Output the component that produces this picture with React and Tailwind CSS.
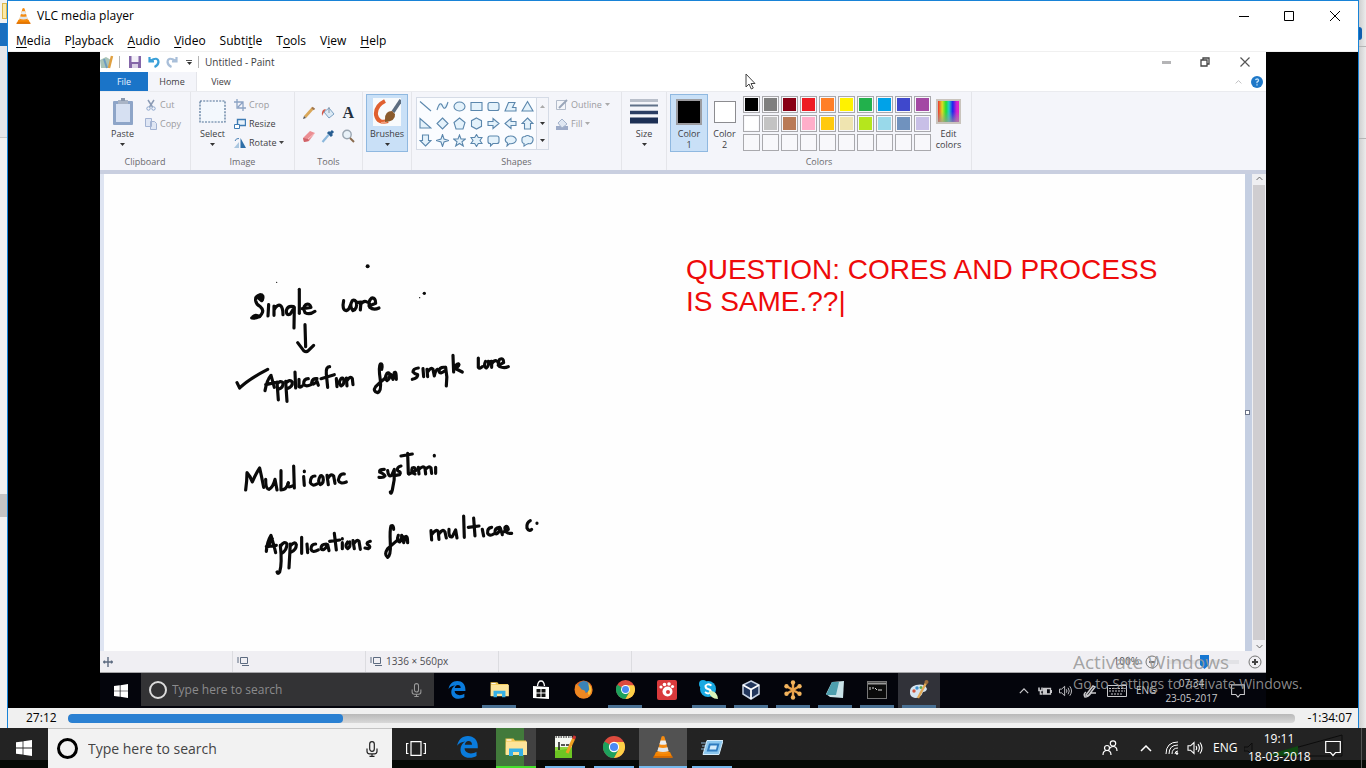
import React from "react";

const Arrow = ({ className = "fill-[#333]" }) => (
  <svg viewBox="0 0 5 3" className={`h-[3px] w-[5px] ${className}`} aria-hidden="true">
    <path d="M0 0h5L2.5 3z" />
  </svg>
);

/* ---------- shared icons ---------- */

const Cone = ({ className }) => (
  <svg viewBox="0 0 20 22" className={className} aria-hidden="true">
    <path d="M3 16h14l2.5 5.5h-19z" fill="#f58400" />
    <path d="M.8 20h18.4l.6 1.8H.2z" fill="#d86a00" />
    <path d="M8.6.6Q10-.4 11.4.6L16 17q-6 2.600-12 0z" fill="#f58c12" />
    <path d="M7.600 4.500h4.900l1.200 3.700q-3.700 1.200-7.300 0z" fill="#e9eef2" />
    <path d="M5.500 11.200q4.500 1.500 9 0l1.100 3.700q-5.600 2-11.200 0z" fill="#dfe5ea" />
  </svg>
);

const WinLogo = ({ className }) => (
  <svg viewBox="0 0 16 16" className={className} fill="#fff" aria-hidden="true">
    <path d="M0 2.300 6.600 1.400V7.600H0zM7.400 1.300 16 0V7.600H7.400zM0 8.400H6.600V14.600L0 13.700zM7.400 8.400H16V16L7.400 14.700z" />
  </svg>
);

const Edge = ({ className }) => (
  <svg viewBox="0 0 20 21" className={className} fill="#0a7bdc" aria-hidden="true">
    <path d="M.2 9.300C.9 4 4.800 0 10.400 0 16 0 19.800 4 19.800 9.500v2.300H7.200c.1 3.300 2.800 4.800 6 4.800 2 0 3.900-.6 5.400-1.600v4.100C16.800 20.200 14.500 20.800 12 20.800 6.600 20.800 3.300 17.700 3.300 12.800c0-3.300 1.900-6.100 4.600-7.500C4.500 5.500 1.800 7 .2 9.300zM7.400 8.300h6.900c0-2.200-1.100-3.600-3.300-3.600-1.900 0-3.200 1.500-3.600 3.600z" />
  </svg>
);

const Folder = ({ className }) => (
  <svg viewBox="0 0 22 20" className={className} aria-hidden="true">
    <path d="M.5 1.500h8l1.500 2H21v14H.5z" fill="#f2c54b" />
    <path d="M1 4.500h21v13.500H.8z" fill="#fde49a" />
    <path d="M1.500 2.400h5v1.200h-5z" fill="#fff" />
    <path d="M4 19v-7.500h14V19h-4v-4H8v4z" fill="#36b1e6" />
  </svg>
);

const Chrome = ({ className }) => (
  <svg viewBox="0 0 24 24" className={className} aria-hidden="true">
    <circle cx="12" cy="12" r="12" fill="#dd4b3e" />
    <path d="M12 12 1.600 6A12 12 0 0 0 12 24l5.200-9z" fill="#1ea15d" />
    <path d="M12 6.500h10.700A12 12 0 0 1 12 24l5-9z" fill="#fdd047" />
    <circle cx="12" cy="12" r="5.600" fill="#fff" />
    <circle cx="12" cy="12" r="4.400" fill="#4a8af4" />
  </svg>
);

const Mic = ({ className }) => (
  <svg viewBox="0 0 12 16" className={className} fill="none" stroke="currentColor" strokeWidth="1.200" aria-hidden="true">
    <rect x="3.700" y=".7" width="4.600" height="9.600" rx="2.300" />
    <path d="M1 7.500v2.800q0 2.500 2.500 2.500h5q2.500 0 2.500-2.500V7.500M6 12.800v2.600M3.500 15.400h5" />
  </svg>
);

const Speaker = ({ className }) => (
  <svg viewBox="0 0 16 14" className={className} fill="none" stroke="currentColor" strokeWidth="1.100" aria-hidden="true">
    <path d="M1 4.800h2.500L7 1.500v11L3.500 9.200H1zM9 5q1.400 2 0 4M11 3.200q2.800 3.800 0 7.600M13 1.500q4 5.500 0 11" />
  </svg>
);

const Note = ({ className }) => (
  <svg viewBox="0 0 16 16" className={className} fill="none" stroke="currentColor" strokeWidth="1.200" aria-hidden="true">
    <path d="M.7 1h14.600v11H10.500L8 15l-2.500-3H.7z" />
  </svg>
);

const Chevron = ({ className }) => (
  <svg viewBox="0 0 12 7" className={className} fill="none" stroke="currentColor" strokeWidth="1.500" aria-hidden="true">
    <path d="M1 6l5-5 5 5" />
  </svg>
);

/* ---------- VLC window ---------- */

const menus = [
  ["", "M", "edia"],
  ["P", "l", "ayback"],
  ["", "A", "udio"],
  ["", "V", "ideo"],
  ["Subti", "t", "le"],
  ["T", "o", "ols"],
  ["V", "i", "ew"],
  ["", "H", "elp"],
];

function VlcHeader() {
  return (
    <header className="shrink-0 border-b border-[#f0f0f0] bg-white text-black">
      <div className="flex h-[29px] items-center justify-between">
        <div className="flex items-center gap-[6px] pl-2">
          <Cone className="h-4 w-[15px]" />
          <h1 className="text-xs">VLC media player</h1>
        </div>
        <div className="flex">
          <button aria-label="Minimize" className="flex h-[29px] w-[45px] items-center justify-center">
            <svg viewBox="0 0 10 10" className="h-[10px] w-[10px]" stroke="#000"><path d="M0 5.500h10" /></svg>
          </button>
          <button aria-label="Maximize" className="flex h-[29px] w-[45px] items-center justify-center">
            <svg viewBox="0 0 10 10" className="h-[10px] w-[10px]" stroke="#000" fill="none"><path d="M.5.5h9v9h-9z" /></svg>
          </button>
          <button aria-label="Close" className="flex h-[29px] w-[47px] items-center justify-center">
            <svg viewBox="0 0 10 10" className="h-[10px] w-[10px]" stroke="#000"><path d="M0 0l10 10M10 0L0 10" /></svg>
          </button>
        </div>
      </div>
      <nav className="flex h-[21px] items-center gap-[14px] pl-2 text-xs">
        {menus.map(([a, b, c]) => (
          <button key={a + b + c}>
            {a}
            <span className="underline underline-offset-2">{b}</span>
            {c}
          </button>
        ))}
      </nav>
    </header>
  );
}

function SeekBar() {
  return (
    <div className="flex h-5 shrink-0 items-center bg-[#f0f0f0] text-xs text-black">
      <span className="w-[60px] pl-[18px]">27:12</span>
      <div className="relative h-[9px] flex-1 overflow-hidden rounded-sm bg-linear-to-b from-[#b9b9b9] to-[#d8d8d8]">
        <div className="h-full w-[22.4%] rounded-sm bg-[#2a80d2]" />
        <input type="range" min="0" max="7279" defaultValue="1632" aria-label="Playback position" className="absolute inset-0 h-full w-full opacity-0" />
      </div>
      <span className="w-[63px] pr-[6px] text-right">-1:34:07</span>
    </div>
  );
}

/* ---------- Paint ribbon ---------- */

function Group({ label, width, children }) {
  return (
    <section className={`flex shrink-0 flex-col border-r border-[#e4e5ea] ${width}`}>
      <div className="flex h-[63px] pt-[3px]">{children}</div>
      <h2 className="h-4 text-center leading-4 text-[#6a6a6e]">{label}</h2>
    </section>
  );
}

function Big({ label, icon, arrow, width, active }) {
  return (
    <button className={`flex h-14 shrink-0 flex-col items-center ${width} ${active ? "bg-[#c9e0f7] outline outline-[#8fb8e0]" : ""}`}>
      <span className="flex h-[33px] items-center justify-center">{icon}</span>
      <span className="leading-[11px] whitespace-pre-line">{label}</span>
      {arrow && <span className="flex h-[10px] items-center"><Arrow /></span>}
    </button>
  );
}

function Small({ label, icon, dim, arrow }) {
  return (
    <button className={`flex h-[19px] items-center gap-[3px] ${dim ? "text-[#9b9ba0]" : ""}`}>
      <span className="flex w-3 justify-center">{icon}</span>
      {label}
      {arrow && <Arrow className={dim ? "fill-[#aaa]" : "fill-[#444]"} />}
    </button>
  );
}

const Ic = ({ children, size = "h-3 w-3", box = "0 0 12 12" }) => (
  <svg viewBox={box} className={size} fill="none" aria-hidden="true">{children}</svg>
);

const toolIcons = [
  ["Pencil", <Ic key="p" size="h-[14px] w-[14px]" box="0 0 14 14"><path d="M3 11 11 2" stroke="#d9a75a" strokeWidth="2.800" /><path d="M1 13l1-3 2 2z" fill="#555" /><path d="M10 1.500l2.500 2" stroke="#a0764e" strokeWidth="2" /></Ic>],
  ["Fill with color", <Ic key="f" size="h-[14px] w-[14px]" box="0 0 14 14"><path d="M8 2l5 6-5 4-5-6z" fill="#dceaf5" stroke="#7ba0c2" /><path d="M8 7V1" stroke="#8796a8" /><path d="M5 3Q0 3 1 10l2-4z" fill="#d05a4b" /></Ic>],
  ["Text", <span key="t" className="font-['Liberation_Serif',serif] text-base leading-none font-bold text-[#24303e]">A</span>],
  ["Eraser", <Ic key="e" size="h-[14px] w-[14px]" box="0 0 14 14"><path d="M1 9l7-7 5 2-6 8-5 1z" fill="#eb8e93" /><path d="M1 9l5 1 1 2-5 1z" fill="#cf6268" /><path d="M6 10l7-6" stroke="#f8c4c6" /></Ic>],
  ["Color picker", <Ic key="c" size="h-[14px] w-[14px]" box="0 0 14 14"><path d="M1.500 13l6-7" stroke="#8cb8dc" strokeWidth="2.200" /><path d="M7 3l4 4M8 6l4-4" stroke="#275d91" strokeWidth="3" /></Ic>],
  ["Magnifier", <Ic key="m" size="h-[14px] w-[14px]" box="0 0 14 14"><circle cx="6" cy="5.500" r="4.200" fill="#e8f1f8" stroke="#9aa6b2" strokeWidth="1.400" /><path d="M9 9l4 4" stroke="#8a6b4e" strokeWidth="2" /></Ic>],
];

const shapePaths = [
  "M1 1.500 12 11",
  "M1 10Q4 0 6.500 6T12 2",
  "M1 6.500a5.500 4.500 0 1 0 11 0a5.500 4.500 0 1 0-11 0z",
  "M1 2.500h11v8H1z",
  "M3 2.500h7q2 0 2 2v4q0 2-2 2H3q-2 0-2-2v-4q0-2 2-2z",
  "M1 11 4.500 2.500H11L8.500 7.500H12V11z",
  "M6.500 1.500 12 11H1z",
  "M1 1.500 12 11H1z",
  "M6.500 1 12 6.500 6.500 12 1 6.500z",
  "M6.500 1 12 5.500 10 12H3L1 5.500z",
  "M6.500 1 11.500 3.700v5.600L6.500 12l-5-2.700V3.700z",
  "M1 4.500h5V1.500l6 5-6 5V8.500H1z",
  "M12 4.500H7V1.500l-6 5 6 5V8.500h5z",
  "M6.500 1 12 6.500H9.500V12h-6V6.500H1z",
  "M6.500 12 12 6.500H9.500V1h-6v5.500H1z",
  "M6.500.5 8 5l4.500 1.500L8 8 6.500 12.500 5 8 .5 6.500 5 5z",
  "M6.500 1l1.500 4h4.500l-3.500 2.800L10.300 12l-3.800-2.500L2.700 12 4 7.800.5 5H5z",
  "M6.500.5 8.300 3.500H12L10 6.500l2 3H8.300L6.500 12.500 4.700 9.500H1l2-3-2-3h3.700z",
  "M3 2h7q2 0 2 2v3.500q0 2-2 2H6L3.500 12V9.500H3q-2 0-2-2V4q0-2 2-2z",
  "M6.500 2a5.500 3.900 0 1 1-1 7.700L3 12 3.500 9A5.500 3.900 0 0 1 6.500 2z",
  "M4 2.500q2.500-2 5 0 3.500 0 3 4-1 4-4.500 3Q5 10.500 3 12L3 9.500Q.5 9 1 6 .5 2.500 4 2.500z",
];

const palette = [
  "bg-black", "bg-[#7f7f7f]", "bg-[#880015]", "bg-[#ed1c24]", "bg-[#ff7f27]", "bg-[#fff200]", "bg-[#22b14c]", "bg-[#00a2e8]", "bg-[#3f48cc]", "bg-[#a349a4]",
  "bg-white", "bg-[#c3c3c3]", "bg-[#b97a57]", "bg-[#ffaec9]", "bg-[#ffc90e]", "bg-[#efe4b0]", "bg-[#b5e61d]", "bg-[#99d9ea]", "bg-[#7092be]", "bg-[#c8bfe7]",
  "", "", "", "", "", "", "", "", "", "",
];

function Ribbon() {
  return (
    <div className="flex h-[79px] shrink-0 overflow-hidden border-t border-[#eaebef] bg-[#f4f5fa] text-[#3d3d42]">
      <Group label="Clipboard" width="w-[91px]">
        <Big width="w-[45px]" label="Paste" arrow icon={
          <Ic size="h-7 w-[22px]" box="0 0 22 28"><rect x="1" y="3" width="20" height="24" rx="1" fill="#8ea5c8" /><path d="M4 6h14v18H4z" fill="#d6e0f2" /><path d="M6 2h10v4H6z" fill="#a9b4c6" /><path d="M9 0h4v3H9z" fill="#8a98ae" /></Ic>
        } />
        <div>
          <Small dim label="Cut" icon={<Ic><path d="M3 1l4.500 7M9 1L4.500 8" stroke="#8b9bb5" strokeWidth="1.500" /><circle cx="3.500" cy="9.500" r="1.700" stroke="#8aa5cc" /><circle cx="8.500" cy="9.500" r="1.700" stroke="#8aa5cc" /></Ic>} />
          <Small dim label="Copy" icon={<Ic><path d="M.5.500h6v8h-6zM5.500 3.500h4l2 2v6h-6z" fill="#dfe6f4" stroke="#a3b3d3" /></Ic>} />
        </div>
      </Group>
      <Group label="Image" width="w-[104px]">
        <Big width="w-[43px]" label="Select" arrow icon={
          <Ic size="h-[23px] w-[27px]" box="0 0 27 23"><path d="M1 1h25v21H1z" fill="#f3f8fd" stroke="#4f7196" strokeWidth="1.200" strokeDasharray="2 1.200" /></Ic>
        } />
        <div>
          <Small dim label="Crop" icon={<Ic><path d="M3 0v9h9M0 3h9v9M4 8l5-5" stroke="#8ca2c4" strokeWidth="1.300" /></Ic>} />
          <Small label="Resize" icon={<Ic><path d="M3.500 1.500h8v6h-8z" fill="#e8f2fb" stroke="#3f7cb5" strokeWidth="1.400" /><path d="M.5 6.500h5v4h-5z" fill="#fff" stroke="#3f7cb5" /></Ic>} />
          <Small label="Rotate" arrow icon={<Ic><path d="M6.500 1v10H12z" fill="#2f6fa8" /><path d="M5 5v6H0z" fill="#a9c6e0" /><path d="M1 4q1-3 4-2.500" stroke="#4a80b5" /></Ic>} />
        </div>
      </Group>
      <Group label="Tools" width="w-[68px]">
        <div className="grid h-14 grow grid-cols-3 place-items-center px-1 pt-[6px] pb-1">
          {toolIcons.map(([name, icon]) => (
            <button key={name} aria-label={name}>{icon}</button>
          ))}
        </div>
      </Group>
      <Group width="w-[49px]">
        <div className="pl-1">
          <Big active width="w-10" label="Brushes" arrow icon={
            <Ic size="h-7 w-[28px]" box="0 0 28 28"><path d="M0 0h28v28H0z" fill="#f8fafc" /><path d="M12 3Q2 8 3 17q2 9 12 6" stroke="#e06030" strokeWidth="4" /><path d="M8 25q6 0 8-5" stroke="#f0a080" strokeWidth="2" /><path d="M20 14 28 2" stroke="#5d6d80" strokeWidth="3.500" /><path d="M12 21q0-8 7-8l3 3q1 7-10 8z" fill="#8a5a2c" /></Ic>
          } />
        </div>
      </Group>
      <Group label="Shapes" width="w-[210px]">
        <div className="mt-[2px] ml-1 flex h-[53px] border border-[#d5dbe6] bg-[#fafcff]">
          <div className="grid grid-cols-7 grid-rows-3">
            {shapePaths.map((d) => (
              <svg key={d} viewBox="0 0 13 13" className="m-[2px] h-[13px] w-[13px]" fill="#e4f2fb" stroke="#5b87ad" strokeWidth="1.100" aria-hidden="true"><path d={d} /></svg>
            ))}
          </div>
          <div className="flex w-3 flex-col items-center justify-around border-l border-[#d5dbe6] bg-[#f4f5fa]">
            <Arrow className="rotate-180 fill-[#aaa]" />
            <Arrow />
            <Arrow />
          </div>
        </div>
        <div className="ml-[7px]">
          <Small dim arrow label="Outline" icon={<Ic><path d="M.5 1.500h9v9h-9z" fill="#f4f6fa" stroke="#b3bccb" /><path d="M3 9l8-8" stroke="#9aa6ba" strokeWidth="2" /></Ic>} />
          <Small dim arrow label="Fill" icon={<Ic><path d="M0 8h12v4H0z" fill="#9dabc8" /><path d="M6 1l5 5-5 4-4-5z" fill="#e0e7f2" stroke="#a4b3cb" /></Ic>} />
        </div>
      </Group>
      <Group width="w-[45px]">
        <Big width="w-11" label="Size" arrow icon={
          <Ic size="h-[25px] w-7" box="0 0 28 25"><path d="M0 1.500h28" stroke="#b9bfca" strokeWidth="3" /><path d="M0 6.500h28" stroke="#5f7088" strokeWidth="2" /><path d="M0 13.500h28" stroke="#2a3d63" strokeWidth="3.500" /><path d="M0 21.500h28" stroke="#1c2f55" strokeWidth="6" /></Ic>
        } />
      </Group>
      <Group label="Colors" width="w-[305px]">
        <div className="pl-1">
          <Big active width="w-9" label={"Color\n1"} icon={<span className="h-[26px] w-[26px] border-2 border-[#9c9ca0] bg-black" />} />
        </div>
        <Big width="w-[35px]" label={"Color\n2"} icon={<span className="h-[22px] w-[22px] border border-[#8c8c90] bg-white" />} />
        <div className="grid h-[56px] grid-cols-10 gap-[2px] pt-[1px] pl-px">
          {palette.map((c, i) => (
            <button key={i} aria-label={`Palette color ${i + 1}`} className="h-[17px] w-[17px] border border-[#a9a9ad] bg-[#f8f8fb] p-px">
              <span className={`block h-full w-full ${c}`} />
            </button>
          ))}
        </div>
        <Big width="w-[35px]" label={"Edit\ncolors"} icon={
          <span className="h-[25px] w-[25px] border-2 border-[#c9c4bd]">
            <span className="block h-full w-full bg-[linear-gradient(90deg,#e33,#dd2_20%,#2d3_38%,#2cc_52%,#22e_70%,#d2c_90%)]">
              <span className="block h-full w-full bg-linear-to-b from-transparent via-transparent to-[#999]/70" />
            </span>
          </span>
        } />
      </Group>
    </div>
  );
}

function PaintHeader() {
  return (
    <header className="shrink-0 bg-white text-[#3d3d42]">
      <div className="flex h-5 items-center">
        <div className="flex flex-1 items-center">
          <svg viewBox="0 0 14 14" className="h-[14px] w-[14px]" aria-hidden="true"><path d="M0 5l6-3 5 3-2 8H1z" fill="#a9c4b8" /><path d="M4 4l3 9" stroke="#6c9cc0" strokeWidth="2" /><path d="M9 13l3-12" stroke="#e0a040" strokeWidth="2.500" /></svg>
          <span className="mr-[9px] ml-[5px] h-3 w-px bg-[#b5b5b5]" />
          <button aria-label="Save"><svg viewBox="0 0 12 12" className="h-3 w-3"><path d="M0 0h12v12H0z" fill="#8466a8" /><path d="M2.500 0h7v6h-7z" fill="#f3f0f8" /><path d="M3 8h6v4H3z" fill="#d9d0e6" /></svg></button>
          <button aria-label="Undo" className="ml-[7px]"><svg viewBox="0 0 12 12" className="h-3 w-3" fill="none" stroke="#3ba0d8" strokeWidth="2.200"><path d="M1.500 1v4.500H6M2 5Q10 0 10.500 6 10 9.500 6.500 11" /></svg></button>
          <button aria-label="Redo" className="ml-[6px]"><svg viewBox="0 0 12 12" className="h-3 w-3" fill="none" stroke="#a9bfd9" strokeWidth="2.200"><path d="M10.500 1v4.500H6M10 5Q2 0 1.500 6 2 9.500 5.500 11" /></svg></button>
          <button aria-label="Customize toolbar" className="ml-[8px] flex flex-col items-center gap-px"><span className="h-px w-[6px] bg-[#555]" /><Arrow /></button>
          <span className="mx-[6px] h-3 w-px bg-[#b5b5b5]" />
          <span className="text-[10px]">Untitled - Paint</span>
        </div>
        <button aria-label="Minimize Paint" className="flex w-[38px] justify-center"><span className="h-[3px] w-[9px] bg-[#b4b4b6]" /></button>
        <button aria-label="Restore Paint" className="flex w-[40px] justify-center"><svg viewBox="0 0 10 10" className="h-[10px] w-[10px]" fill="none" stroke="#444" strokeWidth="1.300"><path d="M1 3h6v6H1zM3 3V1h6v6H7" /></svg></button>
        <button aria-label="Close Paint" className="mr-[2px] flex w-[39px] justify-center"><svg viewBox="0 0 10 10" className="h-[10px] w-[10px]" stroke="#555" strokeWidth="1.200"><path d="M.5.5l9 9M9.500.5l-9 9" /></svg></button>
      </div>
      <div className="flex h-[19px] items-stretch">
        <button className="w-12 bg-[#1a74c8] text-[#e6f2ff]">File</button>
        <button className="w-[49px] border-r border-[#e4e5ea] bg-[#f4f5fa]">Home</button>
        <button className="w-12">View</button>
        <span className="flex-1" />
        <button aria-label="Collapse ribbon" className="px-[9px] text-[#b5b5b8]"><Chevron className="h-1 w-[7px]" /></button>
        <button aria-label="Help with Paint" className="mr-[3px] flex items-center">
          <svg viewBox="0 0 12 12" className="h-3 w-3"><circle cx="6" cy="6" r="6" fill="#1e78c8" /><path d="M4.500 4.200Q4.800 3 6.200 3t1.300 1.500Q7.200 5.500 6 6v1.200M6 8.300v1.200" stroke="#bfe0fa" strokeWidth="1.300" fill="none" /></svg>
        </button>
      </div>
    </header>
  );
}

/* ---------- Ink on the canvas ---------- */

const inkTop = [
  "M112 150Q118 134 105 134 90 138 92 152 94 164 106 170 118 180 110 192 102 206 80 204M96 140Q106 134 110 148",
  "M98 142 110 152M84 200Q92 192 104 200",
  "M131 164 129 198",
  "M147 168V196M147 180Q158 160 168 168 174 176 174 194",
  "M206 170Q188 166 184 182 184 198 196 192L208 172 207 234",
  "M223 118V190",
  "M232 176 258 172Q254 158 242 164 232 172 240 188 254 196 270 184",
  "M356 152Q350 180 364 182 372 180 376 166",
  "M382 152Q372 168 384 182 398 176 394 156 388 148 382 152M394 158 408 156 406 180M406 164Q416 150 426 156",
  "M432 168 452 160Q452 142 440 144 428 154 434 172 446 182 462 174",
  "M240 224 242 290M218 278 236 302Q244 308 250 302L266 286",
  "M36 398 44 414Q70 388 128 358",
  "M120 422Q126 390 138 376L148 412M122 404 150 398",
  "M156 396 160 450M156 402Q166 390 174 398 176 412 160 418",
  "M182 394 186 454M182 400Q194 386 202 396 204 410 186 416",
  "M210 366 212 414M222 388V410Q226 414 232 408",
  "M250 386Q236 386 236 402 242 412 258 404",
  "M276 386Q262 384 260 398 264 408 276 394L280 406",
  "M314 350Q302 350 304 372L308 412M288 386 328 374",
  "M334 386 336 410",
  "M348 386Q338 398 348 408 360 402 356 388 352 382 348 386",
  "M364 384 366 408M366 392Q376 376 382 386L384 404",
  "M470 358Q474 340 466 342 460 350 466 390 470 424 458 428 442 424 452 410 466 396 484 382",
  "M486 370Q476 386 486 392 496 386 494 372 490 366 486 370M498 374 504 388 508 368Q514 362 514 388",
  "M580 354Q564 356 564 366 568 372 578 374 580 384 562 388",
  "M594 356 596 380M606 358 608 380M608 366Q618 350 624 358L628 378Q632 360 638 358",
  "M660 352Q644 350 642 364 646 374 660 362M662 352Q668 380 664 408",
  "M684 316 686 366M686 354Q700 336 702 344 700 352 688 354L712 366",
  "M760 324V352Q764 358 772 350",
  "M782 334Q774 350 784 354 794 346 790 334M790 336 800 334V352M800 342Q808 328 816 334",
  "M820 346 836 338Q836 322 824 328 816 342 824 350 838 356 850 350",
];

const inkBottom = [
  "M62 150Q66 120 66 98 76 108 82 126 94 98 104 84 110 110 116 142",
  "M122 118Q122 148 132 148 144 142 150 118L156 150M168 92V150Q184 150 190 130",
  "M206 78 208 144M190 128Q182 148 206 136",
  "M236 110 238 136M238 93V95",
  "M270 108Q256 108 256 128 262 140 276 132",
  "M286 108Q276 124 286 134 298 128 294 112 290 104 286 108",
  "M306 106 310 134M308 116Q318 98 326 108L330 130",
  "M358 102Q344 100 340 120 344 134 364 126",
  "M478 88Q462 88 464 96 478 102 480 108 476 114 462 112",
  "M488 92Q490 112 500 106L508 88M508 90Q510 120 502 150 498 166 496 156",
  "M528 78Q514 82 518 92 530 96 524 104L512 106",
  "M548 40 550 100M528 48 562 42",
  "M552 102 572 92Q572 80 562 84 556 98 570 102",
  "M580 82 582 102M582 88Q594 76 600 84L602 102M602 88Q612 76 618 84L620 100M632 82V100M628 46V48",
  "M124 334Q126 306 138 286 148 320 152 338M124 320 154 316M130 316 142 296",
  "M166 316Q172 370 164 396 158 404 156 396M166 320Q178 300 186 312 186 330 170 340",
  "M196 312 192 384M196 318Q210 302 214 314 214 330 196 338",
  "M230 292V340M246 312 248 338",
  "M272 312Q258 312 258 328 262 340 280 330",
  "M304 312Q288 312 288 326 296 336 308 314L312 332",
  "M328 280 334 330M314 304 344 300",
  "M352 308V326M352 296V297",
  "M368 306Q358 320 368 326 378 320 374 306M384 302 388 326M386 312Q396 296 402 304L406 328",
  "M436 304Q422 308 428 314 440 320 430 326L420 324",
  "M506 268Q506 254 498 258 494 270 496 310 498 346 488 352 476 344 488 326 504 312 520 298",
  "M520 286Q514 302 524 306 532 300 530 286M534 290 536 308 542 290Q548 286 548 308",
  "M618 272 620 300M620 284Q634 264 640 276L642 298M642 282Q654 264 660 276L664 294",
  "M672 268Q670 294 682 290L692 270 696 294M716 228 718 292",
  "M746 234 750 288M730 262 762 258M772 268 776 288",
  "M800 262Q786 264 788 280 794 290 806 282M824 262Q808 264 810 280 820 286 826 264L832 284",
  "M836 276 850 268Q848 254 840 262 838 282 860 280",
  "M916 242Q904 248 906 264 912 276 920 268M936 249V250",
];

function Ink() {
  return (
    <svg viewBox="104 174 480 430" className="absolute top-0 left-0 h-[430px] w-[480px]" fill="none" stroke="#0a0a0a" strokeWidth="9.500" strokeLinecap="round" strokeLinejoin="round" role="img" aria-label="Handwritten notes">
      <g transform="translate(225 250) scale(.3333)">
        {inkTop.map((d) => <path key={d} d={d} />)}
        <g fill="#0a0a0a" stroke="none">
          <circle cx="428" cy="49" r="6" /><circle cx="598" cy="130" r="5" /><circle cx="155" cy="97" r="2" /><circle cx="584" cy="143" r="2" />
        </g>
      </g>
      <g transform="translate(225 440) scale(.3333)">
        {inkBottom.map((d) => <path key={d} d={d} />)}
      </g>
    </svg>
  );
}

function Canvas() {
  return (
    <main className="flex min-h-0 flex-1 border-t-4 border-[#c9cfe0] bg-[#dfe5f2] pl-1">
      <div className="relative flex-1 bg-[#fefefe]">
        <Ink />
        <p className="ml-[51%] w-[490px] pt-20 font-['Liberation_Sans',Arial,sans-serif] text-[28px] leading-8 text-[#ee0a0a]">
          QUESTION: CORES AND PROCESS IS SAME.??|
        </p>
      </div>
      <div className="flex w-[7px] items-center bg-[#c5cfe2]">
        <span className="h-[5px] w-[5px] border border-[#6a7388] bg-white" />
      </div>
      <div className="flex w-[14px] flex-col items-center bg-[#efeff2] py-[2px] text-[#555]">
        <Chevron className="h-[5px] w-[7px]" />
        <div className="my-1 w-3 flex-1 bg-[#cfcdd0]" />
        <Chevron className="h-[5px] w-[7px] rotate-180" />
      </div>
    </main>
  );
}

const SizeIcon = () => (
  <svg viewBox="0 0 12 11" className="h-[11px] w-3" fill="none" stroke="#5d6b80" aria-hidden="true"><path d="M3.500 1.500h7v6h-7zM1 1v6M5 9.500h7" /></svg>
);

function StatusBar() {
  return (
    <footer className="flex h-[22px] shrink-0 items-center border-b border-[#a5a5a8] bg-[#f0eff3] text-[#4d4d52]">
      <div className="flex h-full w-[133px] items-center border-r border-[#dcdce0] pl-[3px]">
        <svg viewBox="0 0 10 10" className="h-[10px] w-[10px]" stroke="#5d6b80" strokeWidth="1.400" aria-hidden="true"><path d="M5 0v10M0 5h10M1.500 3.500v3M8.500 3.500v3" /></svg>
      </div>
      <div className="flex h-full w-[133px] items-center border-r border-[#dcdce0] pl-1"><SizeIcon /></div>
      <div className="flex h-full w-[133px] items-center gap-1 border-r border-[#dcdce0] pl-1 text-[10px]"><SizeIcon />1336 × 560px</div>
      <div className="h-full w-[133px] border-r border-[#dcdce0]" />
      <div className="flex flex-1 items-center justify-end pr-[4px]">
        <span className="text-[10px]">100%</span>
        <button aria-label="Zoom out" className="ml-[6px]"><svg viewBox="0 0 14 14" className="h-[14px] w-[14px]" fill="none" stroke="#777"><circle cx="7" cy="7" r="6" /><path d="M4 7h6" strokeWidth="2" /></svg></button>
        <div className="relative mx-[9px] flex h-4 w-[71px] items-center">
          <div className="h-1 w-full bg-[#e2e2e6]" />
          <svg viewBox="0 0 9 14" className="absolute left-[32px] h-[14px] w-[9px]" fill="#1677d2" aria-hidden="true"><path d="M0 0h9v10l-4.500 4L0 10z" /></svg>
          <input type="range" aria-label="Zoom" className="absolute inset-0 w-full opacity-0" />
        </div>
        <button aria-label="Zoom in"><svg viewBox="0 0 14 14" className="h-[14px] w-[14px]" fill="none" stroke="#777"><circle cx="7" cy="7" r="6" /><path d="M4 7h6M7 4v6" stroke="#444" strokeWidth="2" /></svg></button>
      </div>
    </footer>
  );
}

const innerApps = [
  ["Edge", false, <Edge key="i" className="h-[18px] w-[18px]" />],
  ["Files", true, <Folder key="i" className="h-[17px] w-[19px]" />],
  ["Store", false, <Ic key="i" size="h-5 w-[18px]" box="0 0 18 20"><path d="M1 6l16 1v12L1 18z" fill="#fff" /><path d="M5.500 6Q6 1 9 1t3.500 5" stroke="#fff" strokeWidth="1.300" /><path d="M4.500 9h4v3.500h-4zM9.500 9h4v3.500h-4zM4.500 13.500h4V17h-4zM9.500 13.500h4V17h-4z" fill="#111" /></Ic>],
  ["Firefox", false, <Ic key="i" size="h-[19px] w-[19px]" box="0 0 20 20"><circle cx="10" cy="10" r="9.500" fill="#e2631d" /><circle cx="10.500" cy="7.500" r="6.500" fill="#3a83b8" /><path d="M2 4q4 2 6 6 5 1 4 4 5-1 6-8 4 9-4 13-8 2-12-4-2-5 0-11z" fill="#ee8822" /><path d="M15 3q6 6 1 13-3-2 0-6z" fill="#f9c43c" /></Ic>],
  ["Chrome", true, <Chrome key="i" className="h-[19px] w-[19px]" />],
  ["Recorder", false, <Ic key="i" size="h-5 w-5" box="0 0 20 20"><rect width="20" height="20" rx="2" fill="#d93a3c" /><circle cx="10.500" cy="11.500" r="5" fill="#fff" /><circle cx="11" cy="12" r="2" fill="#d93a3c" /><g fill="#fff"><circle cx="4" cy="7" r="1.600" /><circle cx="7.500" cy="4.500" r="1.800" /><circle cx="12" cy="4" r="1.800" /><circle cx="15.500" cy="6.500" r="1.600" /></g></Ic>],
  ["Skype", true, <Ic key="i" size="h-5 w-5" box="0 0 20 20"><circle cx="9" cy="9" r="8" fill="#19a9e2" /><circle cx="4" cy="4" r="4" fill="#19a9e2" /><path d="M12.500 5.500Q8 3 6.500 6 6.500 8.500 9 9T12 11.500Q10 15 6 12" stroke="#fff" strokeWidth="2" /><path d="M10 11q8-1 9 8-8 0-9-8z" fill="#d9f3b8" /></Ic>],
  ["VirtualBox", true, <Ic key="i" size="h-5 w-5" box="0 0 20 20"><path d="M10 1l8 4v9l-8 5-8-5V5z" fill="#22365c" stroke="#c7d3e5" strokeWidth="1.500" /><path d="M2 5l8 4.500L18 5M10 9.500V19" stroke="#fff" strokeWidth="1.800" /></Ic>],
  ["Meeting", true, <Ic key="i" size="h-5 w-5" box="0 0 20 20"><g stroke="#e9a24a" strokeWidth="2.400" strokeLinecap="round"><path d="M10 3v14M4 6.500l12 7M16 6.500l-12 7" /></g><g fill="#f2b45e"><circle cx="10" cy="2.500" r="2.200" /><circle cx="10" cy="17.500" r="2.200" /><circle cx="3.500" cy="6.200" r="2.200" /><circle cx="16.500" cy="6.200" r="2.200" /><circle cx="3.500" cy="13.800" r="2.200" /><circle cx="16.500" cy="13.800" r="2.200" /></g></Ic>],
  ["Notepad", true, <Ic key="i" size="h-5 w-5" box="0 0 20 20"><path d="M7 2l12-1-1 17-13-1-4-3z" fill="#c9e3e8" /><path d="M7 2l7 0-3 13H1z" fill="#4e9fae" /></Ic>],
  ["Command Prompt", true, <Ic key="i" size="h-[18px] w-5" box="0 0 20 18"><rect x=".5" y=".5" width="19" height="17" fill="#0b0b0b" stroke="#777" /><path d="M1 1.500h18v2H1z" fill="#999" /><path d="M3 6v3M5 7h2M8 7l2 2M11 9h4" stroke="#ddd" /></Ic>],
  ["Paint", true, <Ic key="i" size="h-5 w-5" box="0 0 20 20"><path d="M1 13Q0 7 7 5q9-2 11 4-1 3-4 3-2 6-8 6-5-1-5-5z" fill="#d5e4ef" /><circle cx="5" cy="11" r="1.700" fill="#d2573e" /><circle cx="8" cy="8" r="1.700" fill="#3f91cf" /><circle cx="12" cy="7.500" r="1.500" fill="#5aa84f" /><path d="M9 18 17 3" stroke="#e0a855" strokeWidth="2.400" /><circle cx="17.500" cy="2" r="2" fill="#9c6d3a" /></Ic>],
];

function InnerTaskbar() {
  return (
    <div className="flex h-[35px] shrink-0 bg-[#04050c] text-[#c9c9cc]">
      <button aria-label="Start in recording" className="flex w-[41px] items-center justify-center"><WinLogo className="h-[14px] w-[14px]" /></button>
      <label className="flex h-[33px] w-[293px] items-center gap-[5px] bg-[#333335] px-2">
        <span className="h-[18px] w-[18px] shrink-0 rounded-full border-2 border-[#dcdcdc]" />
        <input aria-label="Search in recording" placeholder="Type here to search" className="w-full min-w-0 bg-transparent text-xs outline-none placeholder:text-[#8b8b8d]" />
        <Mic className="mr-1 h-[14px] w-[11px] shrink-0 text-[#999]" />
      </label>
      <div className="ml-[2px] flex">
        {innerApps.map(([name, on, icon]) => (
          <button key={name} aria-label={`${name} in recording`} className={`flex w-[42px] flex-col items-center ${name === "Paint" ? "bg-[#313239]" : ""}`}>
            <span className="flex h-8 items-center pt-px">{icon}</span>
            {on && <span className="h-[3px] w-[34px] bg-[#4a7194]" />}
          </button>
        ))}
      </div>
      <div className="flex flex-1 items-center justify-end text-[10px]">
        <Chevron className="h-[6px] w-[10px]" />
        <svg viewBox="0 0 14 12" className="ml-[9px] h-3 w-[14px]" fill="none" stroke="currentColor" aria-hidden="true"><path d="M5.500 3.500h7v5.500h-7z" strokeWidth="1.300" /><path d="M13 5h1v3h-1zM6 4h3v5H6z" fill="currentColor" stroke="none" /><path d="M1 2.500v3h3v-3M2.500 5v4h2" strokeWidth="1.600" /></svg>
        <Speaker className="ml-[6px] h-3 w-[15px]" />
        <svg viewBox="0 0 14 14" className="ml-[10px] h-[14px] w-[14px]" fill="none" stroke="currentColor" strokeWidth="1.500" aria-hidden="true"><path d="M3 11 10 2l2 1-7 9zM3 8q-3 2-1 5 3 0 6-4h5" /></svg>
        <svg viewBox="0 0 20 12" className="ml-[10px] h-3 w-5" fill="none" stroke="currentColor" aria-hidden="true"><path d="M.5.5h19v11H.5z" /><path d="M2 3.500h16M2 6h16M4 9h12" strokeDasharray="2 1" /></svg>
        <span className="ml-[9px] w-[22px]">ENG</span>
        <span className="ml-[7px] w-[53px] text-center leading-[15px] whitespace-nowrap"><span className="block">07:34</span>23-05-2017</span>
        <Note className="mr-[21px] ml-[13px] h-[14px] w-[14px] shrink-0" />
      </div>
    </div>
  );
}

function PaintRecording() {
  return (
    <div className="relative flex min-w-0 flex-1 flex-col text-[9px] font-medium">
      <PaintHeader />
      <Ribbon />
      <Canvas />
      <StatusBar />
      <InnerTaskbar />
      <svg viewBox="0 0 11 17" className="absolute top-[21px] left-[645px] h-[17px] w-[11px]" fill="#fff" stroke="#444" aria-hidden="true"><path d="M1 1v13l3-3 2.300 5 2-1-2.300-4.500H10z" /></svg>
    </div>
  );
}

/* ---------- Taskbar ---------- */

const apps = [
  ["Microsoft Edge", "", "", <Edge key="i" className="h-[22px] w-[21px]" />],
  ["File Explorer", "", "bg-[#44e02b]", <Folder key="i" className="h-5 w-[22px]" />],
  ["Notepad++", "", "bg-[#76b9ed]", <Ic key="i" size="h-6 w-[22px]" box="0 0 22 24"><path d="M1 1h17v22H1z" fill="#f5f8f2" /><path d="M1 12h17v11H1z" fill="#8bd63c" /><path d="M1 16l17-3v10H1z" fill="#6cc523" /><path d="M1.500 2h16" stroke="#777" strokeWidth="2" strokeDasharray="1.500 1" /><path d="M5 7v8M7 10h4M12 10h3" stroke="#222" strokeWidth="1.600" /><path d="M13 18 20 3" stroke="#f0a020" strokeWidth="3" /><path d="M19.500 4l1.500-3" stroke="#c33" strokeWidth="3" /></Ic>],
  ["Google Chrome", "", "bg-[#76b9ed]", <Chrome key="i" className="h-[22px] w-[22px]" />],
  ["VLC", "bg-[#525252]", "bg-[#76b9ed]", <Cone key="i" className="h-[22px] w-5" />],
  ["Run", "", "bg-[#76b9ed]", <Ic key="i" size="h-[15px] w-[22px]" box="0 0 22 15"><path d="M6 .5h16L18 14.500H2z" fill="#8cc7ee" stroke="#d7edfb" /><path d="M8 3.500h10.500L16.300 11.500H5.700z" fill="#2f7cc0" /><path d="M9.500 5.500h6.500l-1 4H8.400z" fill="#d5ecfb" /><path d="M0 3h5M1 6h3M0 9h3" stroke="#8fb7d6" /></Ic>],
];

function Taskbar() {
  return (
    <footer className="flex h-10 shrink-0 bg-linear-to-b from-[#232323] from-80% to-[#060a06] to-80% text-white">
      <button aria-label="Start" className="flex w-12 items-center justify-center"><WinLogo className="h-4 w-4" /></button>
      <label className="flex w-[344px] items-center gap-[10px] border-t border-[#c4c4c4] bg-[#f2f2f2] pr-[14px] pl-[9px]">
        <span className="h-[21px] w-[21px] shrink-0 rounded-full border-3 border-black" />
        <input aria-label="Search" placeholder="Type here to search" className="w-full min-w-0 bg-transparent text-sm text-[#333] outline-none placeholder:text-[#444]" />
        <Mic className="h-4 w-3 shrink-0 text-[#222]" />
      </label>
      <button aria-label="Task View" className="flex w-12 items-center justify-center">
        <svg viewBox="0 0 20 15" className="h-[15px] w-5" fill="none" stroke="#fff" strokeWidth="1.200"><path d="M5 .6h10v13.800H5zM2.500 2.500H.6v10h1.900M17.500 2.500h1.900v10h-1.900" /></svg>
      </button>
      <div className="ml-[3px] flex gap-px">
        {apps.map(([name, bg, line, icon]) => (
          <button key={name} aria-label={name} className={`flex w-12 flex-col items-center ${bg}`}>
            <span className={`flex h-[38px] items-center justify-center ${name === "File Explorer" ? "w-10 bg-linear-to-r from-[#427a3b] from-70% to-[#424242] to-70%" : ""}`}>{icon}</span>
            <span className={`h-[2px] ${bg ? "w-12" : "w-10"} ${line}`} />
          </button>
        ))}
      </div>
      <div className="relative flex flex-1 items-center justify-end text-xs">
        <svg viewBox="0 0 106 34" className="absolute top-1 right-[16px] h-[34px] w-[106px]" fill="none" aria-hidden="true">
          <path d="M22 24 98 3v21z" stroke="#0c0c0c" /><path d="M22 23.500 54 14v10z" fill="#0f4a12" /><path d="M0 15h4l4-4v12l-4-4H0z" stroke="#0c0c0c" />
        </svg>
        <button aria-label="People" className="z-10">
          <svg viewBox="0 0 16 16" className="h-4 w-4" fill="none" stroke="#fff" strokeWidth="1.200"><circle cx="11" cy="3.500" r="2.700" /><circle cx="5" cy="8" r="2.500" /><path d="M1 15q0-4.500 4-4.500T9 15M7.500 8.500Q9 6.500 11 6.500q4 0 4 4.500" /></svg>
        </button>
        <button aria-label="Show hidden icons" className="z-10 ml-[22px]"><Chevron className="h-[7px] w-3" /></button>
        <svg viewBox="0 0 14 14" className="z-10 ml-[13px] h-[14px] w-[14px]" fill="none" stroke="#fff" aria-hidden="true"><path d="M1 13Q1 1 13 1M4 13Q4 4 13 4M7 13Q7 7 13 7M10 13q0-3 3-3" /><circle cx="12" cy="12.500" r="1.200" fill="#fff" stroke="none" /></svg>
        <Speaker className="z-10 ml-[8px] h-[14px] w-4" />
        <span className="z-10 ml-[10px] w-[25px]">ENG</span>
        <span className="z-10 ml-[10px] w-[62px] text-center leading-[18px] whitespace-nowrap"><span className="block">19:11</span>18-03-2018</span>
        <button aria-label="Notifications" className="z-10 ml-[15px]"><Note className="h-[17px] w-4" /></button>
        <span className="ml-[20px] h-full w-px bg-[#555]" />
        <span className="w-[4px]" />
      </div>
    </footer>
  );
}

export default function App() {
  return (
    <div className="flex h-screen flex-col bg-[#f0f0f0] font-['Open_Sans','Noto_Sans',sans-serif]">
      <div className="flex min-h-0 flex-1">
        <div className="flex w-[7px] shrink-0 flex-col bg-[#f1f1f1]" aria-hidden="true">
          <div className="mt-[3px] ml-[2px] h-4 border border-[#dcb84c] bg-[#fbe9a8]" />
          <div className="mt-1 h-[23px] bg-[#1a6fbf]" />
          <div className="h-[92px] border-b border-[#c9c9c9] bg-[#e4e6ea]" />
          <div className="mt-[356px] h-[23px] bg-[#c4c4c4]" />
        </div>
        <div className="relative flex min-w-0 flex-1 flex-col border-x border-t border-[#1883d7]">
          <VlcHeader />
          <div className="flex min-h-0 flex-1 bg-black px-[92px]">
            <PaintRecording />
          </div>
          <SeekBar />
          <div className="pointer-events-none absolute right-[49px] bottom-[33px] w-[236px] whitespace-nowrap text-[#9a9a9a]/90">
            <p className="text-[19px] leading-[22px]">Activate Windows</p>
            <p className="text-sm leading-[22px]">Go to Settings to activate Windows.</p>
          </div>
        </div>
        <div className="flex w-[7px] shrink-0 flex-col bg-linear-to-r from-[#cfcfcf] to-[#ececec]" aria-hidden="true">
          <div className="h-[47px] border-b border-[#b5b5b5] pt-[27px]"><div className="h-[13px] w-[3px] rounded-r-full bg-[#0f5fae]" /></div>
          <div className="h-[92px] border-b border-[#b5b5b5]" />
        </div>
      </div>
      <Taskbar />
    </div>
  );
}
